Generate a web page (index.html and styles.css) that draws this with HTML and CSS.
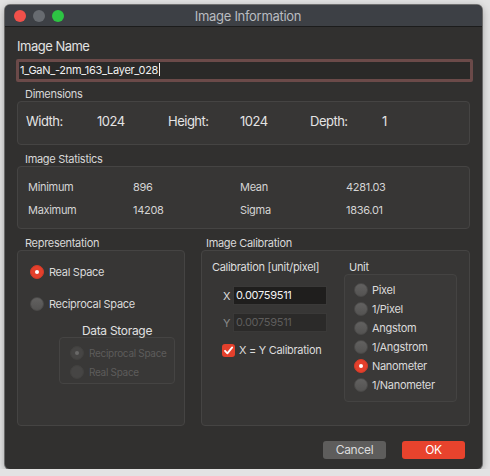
FILE: index.html
```html
<!DOCTYPE html>
<html lang="en">
<head>
  <meta charset="UTF-8">
  <title>Image Information</title>
  <link rel="stylesheet" href="styles.css">
</head>
<body>

<div class="window">
  <div class="titlebar">
    <div class="lights">
      <span class="light red"></span>
      <span class="light gray"></span>
      <span class="light green"></span>
    </div>
    <div class="title">Image Information</div>
  </div>

  <div class="content">
    <div class="name-label">Image Name</div>
    <div class="name-input">1_GaN_-2nm_163_Layer_028<span class="caret"></span></div>

    <div class="group-label">Dimensions</div>
    <div class="box dims">
      <span>Width:</span><span>1024</span>
      <span>Height:</span><span>1024</span>
      <span>Depth:</span><span>1</span>
    </div>

    <div class="group-label">Image Statistics</div>
    <div class="box stats">
      <span>Minimum</span><span>896</span><span>Mean</span><span>4281.03</span>
      <span>Maximum</span><span>14208</span><span>Sigma</span><span>1836.01</span>
    </div>

    <div class="lower">
      <div class="col col-rep">
        <div class="group-label">Representation</div>
        <div class="box rep">
          <div class="opt"><span class="radio on"></span>Real Space</div>
          <div class="opt big"><span class="radio"></span>Reciprocal Space</div>
          <div class="storage">
            <div class="storage-label">Data Storage</div>
            <div class="storage-box">
              <div class="opt dim"><span class="radio dim-on"></span>Reciprocal Space</div>
              <div class="opt dim"><span class="radio dim-off"></span>Real Space</div>
            </div>
          </div>
        </div>
      </div>

      <div class="col col-cal">
        <div class="group-label cal-label">Image Calibration</div>
        <div class="box cal">
          <div class="calib">
            <div class="calib-title">Calibration [unit/pixel]</div>
            <div class="field"><span class="axis">X</span><div class="num">0.00759511</div></div>
            <div class="field"><span class="axis off">Y</span><div class="num disabled">0.00759511</div></div>
            <div class="check-row">
              <span class="check">
                <svg width="13" height="13" viewBox="0 0 13 13"><path d="M3 6.8 L5.4 9.4 L10.2 3.4" fill="none" stroke="#fff" stroke-width="1.8" stroke-linecap="round" stroke-linejoin="round"/></svg>
              </span>
              X = Y Calibration
            </div>
          </div>
          <div class="unit">
            <div class="unit-label">Unit</div>
            <div class="unit-box">
              <div class="opt"><span class="radio"></span>Pixel</div>
              <div class="opt"><span class="radio"></span>1/Pixel</div>
              <div class="opt"><span class="radio"></span>Angstom</div>
              <div class="opt"><span class="radio"></span>1/Angstrom</div>
              <div class="opt"><span class="radio on"></span>Nanometer</div>
              <div class="opt"><span class="radio"></span>1/Nanometer</div>
            </div>
          </div>
        </div>
      </div>
    </div>

    <div class="buttons">
      <div class="btn cancel">Cancel</div>
      <div class="btn ok">OK</div>
    </div>
  </div>
</div>

</body>
</html>
```

FILE: styles.css
```css
body {
  margin: 0;
  padding: 5px 0 0 5px;
  background-color: #e3e3e3;
  font-family: Inter, "Noto Sans", sans-serif;
  color: #dcdcdc;
  letter-spacing: -0.3px;
}

.window {
  width: 477px;
  height: 464px;
  border-radius: 5px;
  overflow: hidden;
  background-color: #31302f;
  box-shadow: 0 2px 8px rgba(0, 0, 0, 0.35), 0 0 0 1px rgba(0, 0, 0, 0.45);
}

.titlebar {
  height: 21px;
  background-color: #3d4045;
  border-bottom: 1px solid #1c1c1c;
  display: flex;
  align-items: center;
}

.lights {
  display: flex;
  gap: 7px;
  padding-left: 9px;
  width: 80px;
}

.light {
  width: 12px;
  height: 12px;
  border-radius: 50%;
}

.red { background-color: #f0504a; }
.gray { background-color: #676b70; }
.green { background-color: #2dc443; }

.title {
  flex: 1;
  text-align: center;
  padding-right: 80px;
  font-size: 13px;
  color: #b9bcc0;
}

.content {
  padding: 11px 12px 0 11px;
}

.name-label {
  font-size: 13px;
  line-height: 16px;
  color: #e2e2e2;
  padding-left: 1px;
  letter-spacing: -0.5px;
}

.name-input {
  margin-top: 5px;
  height: 23px;
  box-sizing: border-box;
  border: 3px solid #6b4a49;
  border-radius: 2px;
  background-color: #2a2928;
  font-size: 11px;
  line-height: 17px;
  padding-left: 1px;
  color: #f0f0f0;
  margin-right: -3px;
}

.caret {
  display: inline-block;
  width: 1px;
  height: 13px;
  background-color: #eee;
  vertical-align: -2px;
  margin-left: 1px;
}

.group-label {
  font-size: 11px;
  line-height: 14px;
  padding-left: 9px;
  margin-top: 5px;
  color: #d8d8d8;
}

.box {
  background-color: #373635;
  border: 1px solid #454443;
  border-radius: 4px;
  margin-left: 1px;
}

.dims {
  height: 44px;
  box-sizing: border-box;
  display: grid;
  grid-template-columns: 71px 71px 72px 70px 72px 1fr;
  align-content: start;
  padding: 11px 0 0 8px;
  font-size: 13px;
  line-height: 16px;
  color: #e4e4e4;
  letter-spacing: -0.5px;
}

.stats {
  height: 63px;
  box-sizing: border-box;
  display: grid;
  grid-template-columns: 105px 107px 106px 1fr;
  row-gap: 9px;
  align-content: start;
  padding: 13px 0 0 10px;
  font-size: 11px;
  line-height: 14px;
  color: #d4d4d4;
}

.dims + .group-label {
  margin-top: 7px;
}

.lower {
  display: flex;
  gap: 15px;
  margin-top: 7px;
}

.lower .group-label {
  margin-top: 0;
}

.col-rep { width: 169px; }
.col-cal { flex: 1; }

.cal-label { padding-left: 6px; }

.rep {
  height: 176px;
  box-sizing: border-box;
  padding: 14px 0 0 12px;
}

.opt {
  display: flex;
  align-items: center;
  gap: 5px;
  font-size: 11px;
  line-height: 14px;
  color: #dadada;
}

.rep .opt.big {
  margin-top: 18px;
}

.radio {
  width: 14px;
  height: 14px;
  border-radius: 50%;
  box-sizing: border-box;
  background: linear-gradient(#626160, #545352);
  border: 1px solid #4a4948;
  flex-shrink: 0;
  position: relative;
}

.radio.on {
  background: #e4402c;
  border-color: #d23a28;
}

.radio.on::after {
  content: "";
  position: absolute;
  left: 4px;
  top: 4px;
  width: 4px;
  height: 4px;
  border-radius: 50%;
  background-color: #fff;
}

.storage {
  margin: 13px 0 0 29px;
  width: 116px;
}

.storage-label {
  text-align: center;
  font-size: 12px;
  line-height: 14px;
  color: #e0e0e0;
}

.storage-box {
  margin-top: -1px;
  height: 47px;
  box-sizing: border-box;
  border: 1px solid #454443;
  border-radius: 4px;
  background-color: #393837;
  padding: 8px 0 0 10px;
  display: flex;
  flex-direction: column;
  gap: 5px;
}

.opt.dim {
  color: #5d5c5b;
  font-size: 10px;
}

.radio.dim-on,
.radio.dim-off {
  background: #464544;
  border-color: #42413f;
}

.radio.dim-on::after {
  content: "";
  position: absolute;
  left: 4px;
  top: 4px;
  width: 4px;
  height: 4px;
  border-radius: 50%;
  background-color: #6a6968;
}

.cal {
  height: 176px;
  box-sizing: border-box;
  display: flex;
  padding: 9px 12px 0 10px;
}

.calib { flex: 1; }

.calib-title {
  font-size: 11px;
  line-height: 14px;
  color: #dedede;
}

.field {
  display: flex;
  align-items: center;
  margin-top: 8px;
  padding-left: 11px;
}

.calib-title + .field {
  margin-top: 12px;
}

.axis {
  width: 10px;
  font-size: 11px;
  color: #dcdcdc;
}

.axis.off { color: #8a8a8a; }

.num {
  width: 94px;
  height: 19px;
  box-sizing: border-box;
  background-color: #1f1e1d;
  border: 1px solid #3a3938;
  font-size: 11px;
  line-height: 17px;
  padding-left: 2px;
  color: #f2f2f2;
}

.num.disabled {
  background-color: #2b2a29;
  color: #5e5d5c;
}

.check-row {
  display: flex;
  align-items: center;
  gap: 4px;
  margin: 11px 0 0 10px;
  font-size: 11px;
  color: #dcdcdc;
}

.check {
  width: 13px;
  height: 13px;
  border-radius: 3px;
  background-color: #e4402c;
  display: flex;
}

.unit { width: 113px; }

.unit-label {
  font-size: 11px;
  line-height: 14px;
  padding-left: 5px;
  color: #dedede;
}

.unit-box {
  height: 128px;
  box-sizing: border-box;
  border: 1px solid #444342;
  border-radius: 4px;
  background-color: #3a3938;
  padding: 8px 0 0 9px;
  display: flex;
  flex-direction: column;
  gap: 5px;
}

.unit-box .opt { gap: 4px; }

.buttons {
  display: flex;
  justify-content: flex-end;
  gap: 16px;
  margin-top: 15px;
  padding-right: 5px;
}

.btn {
  width: 63px;
  height: 18px;
  border-radius: 3px;
  text-align: center;
  font-size: 12px;
  line-height: 18px;
}

.cancel {
  background-color: #5e5d5c;
  color: #dcdcdc;
}

.ok {
  background-color: #e8432d;
  color: #fff;
}
```
